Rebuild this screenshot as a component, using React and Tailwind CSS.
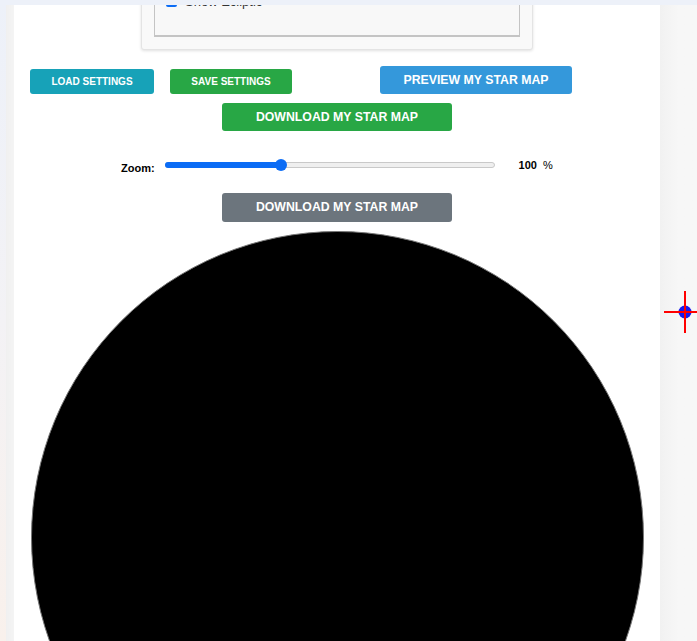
import React from "react";

const font = { fontFamily: '"Liberation Sans", Arial, sans-serif' };

const Crosshair = () => (
  <svg className="absolute left-[664px] top-[291px]" width="42" height="42" viewBox="0 0 42 42">
    <circle cx="21" cy="21" r="6.5" fill="#1a1aee" />
    <rect x="0" y="20" width="42" height="2" fill="#ff0000" />
    <rect x="20" y="0" width="2" height="42" fill="#ff0000" />
  </svg>
);

export default function App() {
  return (
    <div className="relative w-[697px] h-[641px] overflow-hidden bg-[#f7f7f7]" style={font}>
      <div className="absolute top-0 left-0 w-full h-[5px] bg-[#edf1f9] z-10" />

      <div className="flex h-full">
        {/* left gutter */}
        <div className="flex w-[14px] shrink-0">
          <div className="w-[6px] bg-gradient-to-b from-[#edf1f9] via-[#f3f2f5] to-[#f9f1ec]" />
          <div className="w-[8px] bg-gradient-to-r from-[#f0f0f0] to-[#f4f4f4]" />
        </div>

        {/* main panel */}
        <div className="w-[646px] shrink-0 bg-white flex flex-col items-center">
          {/* settings box, scrolled partly out of view */}
          <div className="shrink-0 mt-[-30px] w-[392px] bg-[#f9f9f9] border border-[#e4e4e4] rounded-[3px] shadow-[0_1px_3px_rgba(0,0,0,0.12)] p-[12px]">
            <div className="h-[54px] border border-[#c4c4c4] border-b-2 bg-[#f8f8f8] px-[11px] pt-[11px]">
              <label className="flex items-center gap-[8px] text-[13px] text-[#333] leading-none">
                <input type="checkbox" defaultChecked className="w-[11px] h-[11px] accent-[#0b6cf5]" />
                Show Ecliptic
              </label>
            </div>
          </div>

          {/* settings buttons */}
          <div className="shrink-0 w-full flex items-end pl-[16px] mt-[16px]">
            <button className="w-[124px] h-[25px] bg-[#17a2b8] text-white text-[10px] font-bold rounded-[3px]">
              LOAD SETTINGS
            </button>
            <button className="ml-[16px] w-[122px] h-[25px] bg-[#28a745] text-white text-[10px] font-bold rounded-[3px]">
              SAVE SETTINGS
            </button>
            <button className="ml-[88px] w-[192px] h-[28px] bg-[#3498db] text-white text-[12.3px] font-bold rounded-[3px]">
              PREVIEW MY STAR MAP
            </button>
          </div>

          <button className="shrink-0 mt-[9px] w-[230px] h-[28px] bg-[#28a745] text-white text-[12.3px] font-bold rounded-[3px]">
            DOWNLOAD MY STAR MAP
          </button>

          {/* zoom */}
          <div className="shrink-0 w-full flex items-center mt-[28px] h-[12px]">
            <span className="relative top-[3px] ml-[107px] text-[11px] font-bold text-black">Zoom:</span>
            <div className="relative ml-[10px] w-[330px] h-[6px] rounded-full bg-[#efefef] border border-[#c9c9c9]">
              <div className="absolute left-[-1px] top-[-1px] h-[6px] w-[116px] rounded-full bg-[#0b6cf5]" />
              <div className="absolute left-[109px] top-[-4px] w-[12px] h-[12px] rounded-full bg-[#0b6cf5]" />
            </div>
            <span className="ml-[24px] text-[11px] font-bold text-black">100</span>
            <span className="ml-[6px] text-[11px] text-black">%</span>
          </div>

          <button className="shrink-0 mt-[22px] w-[230px] h-[29px] bg-[#6c757d] text-white text-[12.3px] font-bold rounded-[3px]">
            DOWNLOAD MY STAR MAP
          </button>

          <div className="mt-[9px] w-[613px] h-[613px] shrink-0 rounded-full bg-black border border-[#777]" />
        </div>

        {/* right gutter */}
        <div className="flex-1 bg-gradient-to-r from-[#f1f1f1] via-[#f7f7f7] to-[#f7f7f7]" />
      </div>

      <Crosshair />
    </div>
  );
}
